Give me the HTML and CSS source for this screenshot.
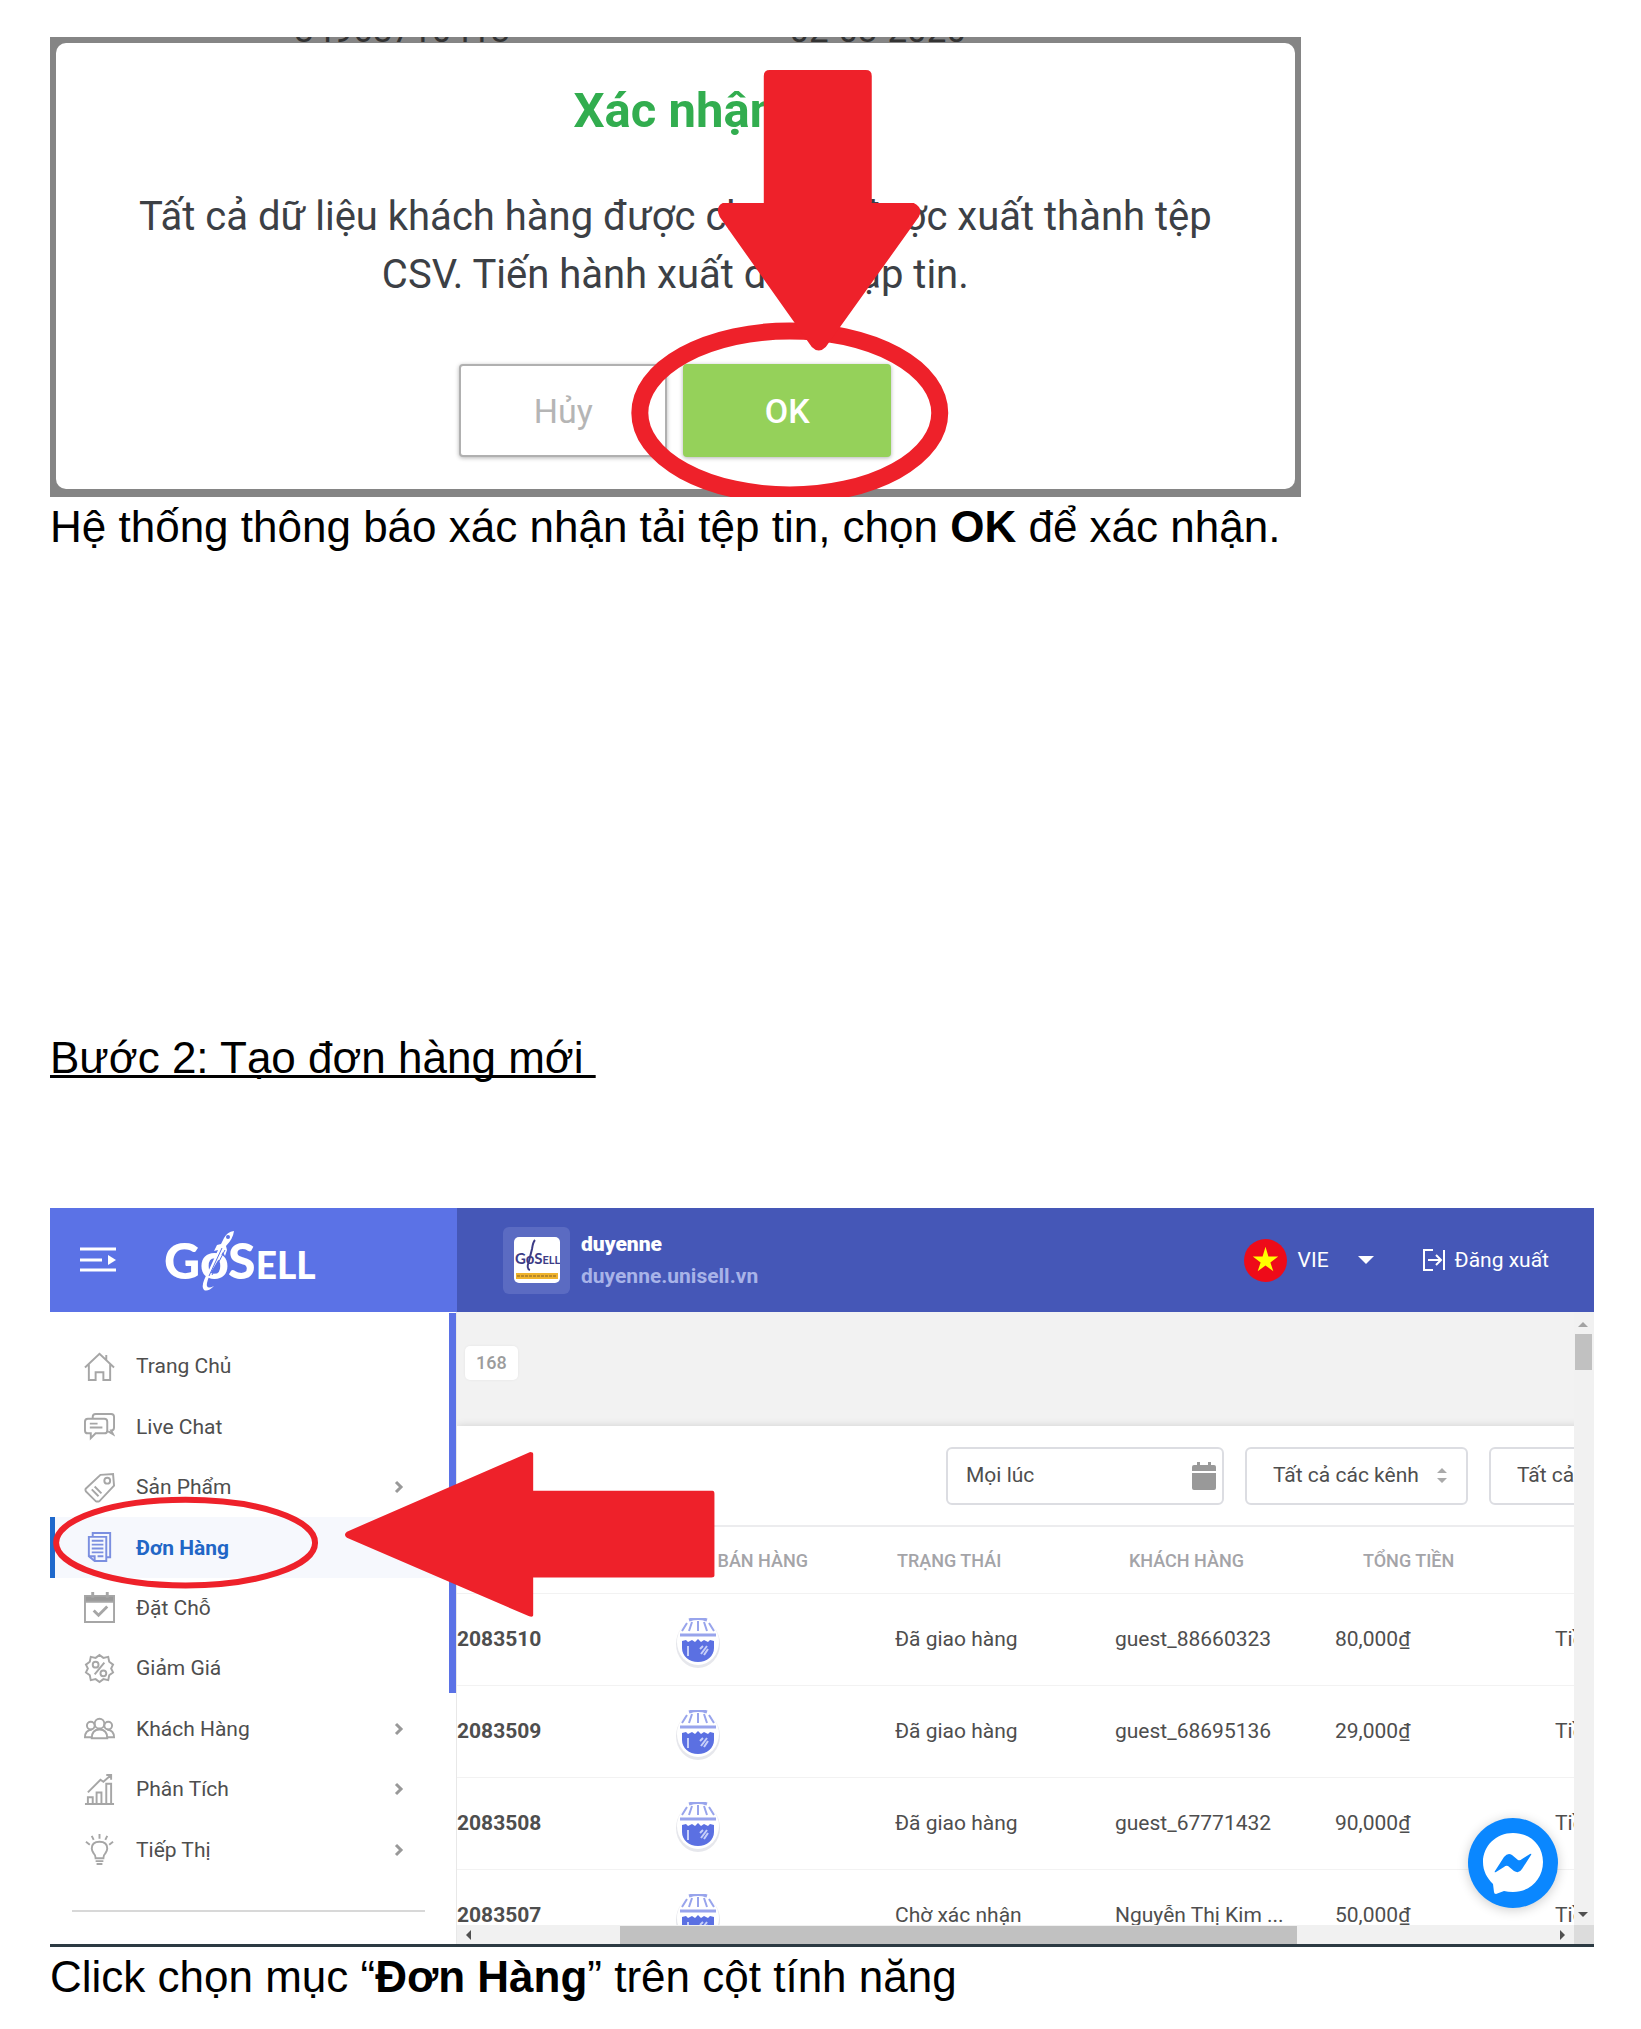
FILE: index.html
```html
<!DOCTYPE html>
<html lang="vi">
<head>
<meta charset="utf-8">
<title>Hướng dẫn GoSell</title>
<link rel="stylesheet" href="styles.css">
</head>
<body>
<svg class="defs" width="0" height="0" aria-hidden="true">
  <symbol id="chevron" viewBox="0 0 10 14"><path d="M2 2l5 5-5 5" fill="none" stroke="#999" stroke-width="3"/></symbol>
  <symbol id="web" viewBox="0 0 44 50">
    <ellipse cx="22" cy="26" rx="22" ry="24" fill="#e6e7ec"/>
    <ellipse cx="22" cy="24" rx="21" ry="23" fill="#fff"/>
    <path d="M13 2q9-3 18 0M4 17h36" fill="none" stroke="#98a4ec" stroke-width="3"/>
    <path d="M11 5l-5 8M16 4l-3 9M22 3v10M28 4l3 9M33 5l5 8" stroke="#98a4ec" stroke-width="2"/>
    <path d="M6 23l4-1 2 2 4-2 3 2 3-3 3 3 3-2 4 2 2-2 4 1V30C38 38 31 44 22 44S6 38 6 30Z" fill="#5b70e2"/>
    <path d="M12 28v10M25 36l6-8M28 37l4-6M24 31l3-3" stroke="#c7cff8" stroke-width="2"/>
  </symbol>
</svg>
<main class="page">
  <figure class="shot confirm">
    <div class="behind"><span>84968710413</span><span>02-03-2020</span></div>
    <section class="dialog">
      <h2>Xác nhận</h2>
      <p>Tất cả dữ liệu khách hàng được chọn sẽ được xuất thành tệp<br>CSV. Tiến hành xuất được tập tin.</p>
      <div class="actions">
        <button type="button" class="btn cancel">Hủy</button>
        <button type="button" class="btn ok">OK</button>
      </div>
    </section>
    <svg class="marks" viewBox="0 0 1251 460" aria-hidden="true">
      <ellipse cx="740" cy="376" rx="150" ry="82" fill="none" stroke="#ee212a" stroke-width="17"/>
      <path d="M720 33h96q6 0 6 6v127h42q10 5 5 14L776 310q-7 7-14 0L670 180q-5-10 3-14h41V39q0-6 6-6Z" fill="#ee212a"/>
    </svg>
  </figure>
  <p class="caption">Hệ thống thông báo xác nhận tải tệp tin, chọn <b>OK</b> để xác nhận.</p>

  <h1 class="step">Bước 2: Tạo đơn hàng mới&nbsp;</h1>

  <figure class="shot app">
    <header class="topbar">
      <div class="brand">
        <button type="button" class="menu" aria-label="Menu">
          <svg width="36" height="26" viewBox="0 0 36 26"><path d="M0 2h36M0 13h22M0 23h36" stroke="#fff" stroke-width="3"/><path d="M28 8l8 5-8 5Z" fill="#fff"/></svg>
        </button>
        <a class="logo" href="#"><span>GoS</span><small>ELL</small>
          <svg viewBox="0 0 36 62" width="36" height="62" aria-hidden="true"><path d="M34 1q-7 1-10 7l-3 6-4 1-3 6 4-1-10 22Q0 56 4 60q4 2 10-4-6 3-7 0Q6 53 11 42L23 22l2 4 2-6-1-4q7-7 8-15Z" fill="#fff"/><path d="M22 18L9 46M25 20L12 45" stroke="#5b72e6" stroke-width="1"/><circle cx="28" cy="7" r="2" fill="#5b72e6"/></svg>
        </a>
      </div>
      <div class="store">
        <span class="thumb"><span class="thumb-in"><svg width="46" height="46" viewBox="0 0 46 46"><text x="1" y="27"><tspan class="big">GoS</tspan><tspan>ELL</tspan></text><path d="M21 3q-2 2-3 9l-3 12q-3 8 1 9" fill="none" stroke="#3d3c86" stroke-width="2"/><path d="M2 36h42v6H2Z" fill="#efb32d"/><path d="M3 39h40" stroke="#b8892a" stroke-width="2" stroke-dasharray="3 1"/></svg></span></span>
        <div class="names"><b>duyenne</b><a href="#">duyenne.unisell.vn</a></div>
      </div>
      <button type="button" class="lang">
        <svg width="43" height="43" viewBox="0 0 44 44"><circle cx="22" cy="22" r="22" fill="#ee0b19"/><path d="M22 8l3 10h10l-8 6 3 9-8-6-8 6 3-9-8-6h10Z" fill="#ff0"/></svg>
        VIE
        <svg class="caret" width="16" height="8" viewBox="0 0 16 8"><path d="M0 0h16L8 8Z" fill="#fff"/></svg>
      </button>
      <a class="logout" href="#">
        <svg width="22" height="22" viewBox="0 0 22 22" fill="none" stroke="#fff" stroke-width="2"><path d="M10 1H1v20h9M5 11h13M13 6l5 5-5 5M21 1v20"/></svg>
        Đăng xuất
      </a>
    </header>
    <div class="body">
      <nav class="side">
        <ul>
          <li><a href="#"><svg viewBox="0 0 32 32"><path d="M1 17L16 3l15 14M5 14v16h7v-8h8v8h7V14M23 9V4"/></svg>Trang Chủ</a></li>
          <li><a href="#"><svg viewBox="0 0 32 32"><path d="M9 8V6q0-3 3-3h16q3 0 3 3v11q0 3-3 3l2 4-5-3M4 8h17q3 0 3 3v9q0 3-3 3h-9l-5 5v-5H4q-3 0-3-3v-9q0-3 3-3ZM6 13h8M6 17h13"/></svg>Live Chat</a></li>
          <li><a href="#"><svg viewBox="0 0 32 32"><path d="M17 3l13-1 1 12L16 30q-2 1-4 0L2 20q-1-2 0-3ZM8 18l7 7M11 15l7 7"/><circle cx="24" cy="9" r="3"/></svg>Sản Phẩm<svg class="go"><use href="#chevron"/></svg></a></li>
          <li class="active"><a href="#"><svg viewBox="0 0 32 32"><path d="M9 4V1h18v25h-4M5 5h18v25H11l-6-5ZM5 25h6v5M8 9h12M8 13h12M8 17h12M8 21h12M14 25h6"/></svg>Đơn Hàng</a></li>
          <li><a href="#"><svg viewBox="0 0 32 32"><path d="M1 4h30v27H1Z"/><path d="M1 4h30v6H1Z" fill="#999"/><path d="M9 0v6M24 0v6" stroke-width="3"/><path d="M10 19l5 5 9-9" stroke-width="3"/></svg>Đặt Chỗ</a></li>
          <li><a href="#"><svg viewBox="0 0 32 32"><path d="M16 2l4 3 5-1 1 5 4 3-2 4 2 4-4 3-1 5-5-1-4 3-4-3-5 1-1-5-4-3 2-4-2-4 4-3 1-5 5 1ZM21 10L11 22"/><circle cx="12" cy="12" r="3"/><circle cx="20" cy="21" r="3"/></svg>Giảm Giá</a></li>
          <li><a href="#"><svg viewBox="0 0 32 32"><circle cx="16" cy="11" r="5"/><circle cx="7" cy="13" r="4"/><circle cx="25" cy="13" r="4"/><path d="M8 26q0-9 8-9t8 9ZM8 25H1q0-7 7-8M24 25h7q0-7-7-8"/></svg>Khách Hàng<svg class="go"><use href="#chevron"/></svg></a></li>
          <li><a href="#"><svg viewBox="0 0 32 32"><path d="M1 31h30M4 31v-7h5v7M13 31V19h5v12M23 31V10h5v21M4 19L17 6l3 2 8-7M23 1h5v5"/></svg>Phân Tích<svg class="go"><use href="#chevron"/></svg></a></li>
          <li><a href="#"><svg viewBox="0 0 32 32"><path d="M12 25q0-3-2-5-2-3-2-5 0-7 8-7t8 7q0 2-2 5-2 2-2 5ZM12 28h8M13 31h6M16 0v5M8 2l2 4M24 2l-2 4M2 8l4 3M30 8l-4 3"/></svg>Tiếp Thị<svg class="go"><use href="#chevron"/></svg></a></li>
        </ul>
        <hr>
        <span class="side-thumb"></span>
      </nav>
      <div class="view">
        <div class="scroller">
          <div class="summary"><span class="count">168</span></div>
          <div class="panel">
            <form class="filters">
              <div class="field date"><input type="text" value="Mọi lúc" aria-label="Thời gian">
                <svg width="24" height="28" viewBox="0 0 24 28" fill="#999"><path d="M5 0h3v3h8V0h3v3h3q2 0 2 2v4H0V5q0-2 2-2h3ZM0 11h24v15q0 2-2 2H2q-2 0-2-2Z"/></svg></div>
              <div class="field channel"><select aria-label="Kênh"><option>Tất cả các kênh</option></select>
                <svg width="10" height="16" viewBox="0 0 10 16" fill="#aaa"><path d="M0 5l5-5 5 5ZM0 10h10l-5 5Z"/></svg></div>
              <div class="field channel"><select aria-label="Trạng thái"><option>Tất cả</option></select></div>
            </form>
            <table>
              <colgroup><col class="c-id"><col class="c-channel"><col class="c"><col class="c"><col class="c"><col class="c"></colgroup>
              <thead><tr><th></th><th class="in1">KÊNH BÁN HÀNG</th><th>TRẠNG THÁI</th><th class="in2">KHÁCH HÀNG</th><th class="in3">TỔNG TIỀN</th><th></th></tr></thead>
              <tbody>
                <tr><td><b>2083510</b></td><td class="ch"><svg><use href="#web"/></svg></td><td>Đã giao hàng</td><td>guest_88660323</td><td>80,000₫</td><td>Tiền mặt</td></tr>
                <tr><td><b>2083509</b></td><td class="ch"><svg><use href="#web"/></svg></td><td>Đã giao hàng</td><td>guest_68695136</td><td>29,000₫</td><td>Tiền mặt</td></tr>
                <tr><td><b>2083508</b></td><td class="ch"><svg><use href="#web"/></svg></td><td>Đã giao hàng</td><td>guest_67771432</td><td>90,000₫</td><td>Tiền mặt</td></tr>
                <tr><td><b>2083507</b></td><td class="ch"><svg><use href="#web"/></svg></td><td>Chờ xác nhận</td><td>Nguyễn Thị Kim ...</td><td>50,000₫</td><td>Tiền mặt</td></tr>
              </tbody>
            </table>
          </div>
        </div>
        <div class="vbar">
          <svg width="10" height="5" viewBox="0 0 10 5"><path d="M0 5l5-5 5 5Z" fill="#a3a3a3"/></svg>
          <i></i>
          <svg width="10" height="5" viewBox="0 0 10 5"><path d="M0 0h10L5 5Z" fill="#505050"/></svg>
        </div>
        <div class="hbar">
          <svg width="5" height="10" viewBox="0 0 5 10"><path d="M5 0v10L0 5Z" fill="#505050"/></svg>
          <i></i>
          <svg width="5" height="10" viewBox="0 0 5 10"><path d="M0 0v10l5-5Z" fill="#505050"/></svg>
        </div>
        <div class="corner"></div>
        <button type="button" class="messenger" aria-label="Messenger">
          <svg width="90" height="90" viewBox="0 0 90 90"><path d="M45 15C28 15 15 28 15 44c0 9 4 16 10 22l1 8q0 2 2 2l8-3q4 1 9 1c17 0 30-13 30-30S62 15 45 15Z" fill="#fff"/><path d="M27 53l9-14q4-5 8-2l6 5q2 1 4-1l8-5q2-1 1 1l-9 14q-3 5-8 2l-6-5q-2-1-4 1l-8 5q-2 1-1-1Z" fill="#0a87ff"/></svg>
        </button>
      </div>
    </div>
    <svg class="marks" viewBox="0 0 1544 739" aria-hidden="true">
      <ellipse cx="133" cy="336" rx="130" ry="43" fill="none" stroke="#ee212a" stroke-width="6"/>
      <path d="M295 325L479 245q3 0 3 2v37h180q2 0 2 3v82q0 2-3 2H482v38q0 2-4 1L295 331q-4-3 0-6Z" fill="#ee212a"/>
    </svg>
  </figure>
  <p class="caption">Click chọn mục “<b>Đơn Hàng</b>” trên cột tính năng</p>
</main>
</body>
</html>
```
FILE: styles.css
```css
* { box-sizing: border-box; }
body { margin: 0; background: #fff; color: #000; font-family: "Liberation Sans", Arial, sans-serif; }
.defs { position: absolute; }
.page { padding: 37px 47px 0 50px; }
h1, h2, p, ul, figure { margin: 0; padding: 0; }
a { color: inherit; text-decoration: none; }
button { border: 0; padding: 0; background: none; font: inherit; color: inherit; }
.shot { position: relative; overflow: hidden; font-family: Roboto, sans-serif; }
.marks { position: absolute; inset: 0; width: 100%; height: 100%; pointer-events: none; }
.caption, .step { font-size: 44px; line-height: 60px; font-weight: 400; }
.step { margin: 471px 0 120px; text-decoration: underline; text-decoration-thickness: 3px; text-decoration-skip-ink: none; }

/* confirmation dialog */
.confirm { width: 81%; background: #858585; padding: 0 6px 8px; }
.behind { display: flex; align-items: flex-end; gap: 279px; height: 6px; padding-left: 238px; overflow: hidden; font-size: 35px; line-height: 24px; color: #333; }
.dialog { background: #fff; border-radius: 10px; padding: 36px 0 32px; text-align: center; }
.dialog h2 { font-size: 49px; line-height: 64px; font-weight: 700; color: #32ad4f; }
.dialog p { margin-top: 45px; font-size: 40px; line-height: 58px; color: #3c4045; white-space: nowrap; }
.actions { display: flex; justify-content: center; gap: 16px; margin-top: 60px; }
.btn { width: 208px; height: 93px; border-radius: 4px; font-size: 34px; box-shadow: 0 1px 4px rgba(0,0,0,.3); }
.cancel { border: 2px solid #b0b0b0; background: #fff; color: #b5b5b5; }
.ok { background: #95d15a; color: #fff; font-weight: 500; }

/* app header */
.app { font-size: 21px; line-height: 28px; color: #4e4e4e; border-bottom: 3px solid #2c3a42; }
.topbar { display: flex; align-items: center; height: 104px; background: #4557b7; color: #fff; }
.brand { display: flex; align-items: center; gap: 48px; width: 407px; height: 100%; padding-left: 30px; background: #5b72e6; }
.menu { display: flex; }
.logo { position: relative; padding-top: 4px; font-family: Lato, sans-serif; font-weight: 900; font-size: 50px; line-height: 60px; }
.logo small { font-size: 37px; }
.logo svg { position: absolute; left: 36px; top: 4px; }
.store { display: flex; align-items: center; gap: 11px; flex: 1; padding-left: 46px; }
.thumb { display: grid; place-items: center; width: 67px; height: 67px; border-radius: 6px; background: #5b6bc2; }
.thumb-in { display: flex; width: 46px; height: 46px; border-radius: 5px; background: #fff; overflow: hidden; }
.thumb text { font-family: Lato, sans-serif; font-size: 11px; font-weight: 700; fill: #3d3c86; }
.thumb .big { font-size: 15px; }
.names { display: grid; gap: 4px; font-weight: 700; }
.names a { color: #a8b3e8; }
.lang { display: flex; align-items: center; gap: 11px; margin-right: 49px; }
.caret { margin-left: 18px; }
.logout { display: flex; align-items: center; gap: 10px; padding-right: 45px; }

/* sidebar */
.body { display: flex; height: 632px; }
.side { position: relative; width: 407px; padding-top: 24px; border-right: 1px solid #e8e8e8; }
.side ul { display: grid; grid-auto-rows: 1fr; height: 544px; list-style: none; }
.side a { display: flex; align-items: center; height: 100%; padding: 0 52px 0 34px; }
.side a svg { width: 31px; height: 31px; margin-right: 21px; fill: none; stroke: #a6a6a6; stroke-width: 2; }
.side a .go { width: 10px; height: 14px; margin: 0 0 0 auto; }
.side .active { background: #f6f8fd; border-left: 5px solid #1f69cc; color: #2166c6; font-weight: 700; }
.side .active a { padding-left: 29px; }
.side .active svg { stroke: #7b8fe0; }
.side hr { margin: 30px 31px 0 22px; border: 0; border-top: 2px solid #d8d8d8; }
.side-thumb { position: absolute; right: 0; top: 1px; width: 7px; height: 380px; background: #5b72e6; }

/* order list with its scroll bars */
.view { position: relative; flex: 1; min-width: 0; display: grid; grid-template: minmax(0, 1fr) 19px / minmax(0, 1fr) 20px; }
.scroller { overflow: hidden; background: #f2f2f2; }
.summary { height: 114px; padding: 34px 8px; }
.count { display: inline-block; padding: 0 11px; border-radius: 5px; background: #fff; color: #9c9c9c; font-size: 18px; line-height: 34px; font-weight: 500; box-shadow: 0 0 3px rgba(0,0,0,.06); }
.panel { width: 1317px; background: #fff; box-shadow: 0 0 8px rgba(0,0,0,.14); }
.filters { display: flex; gap: 21px; height: 101px; padding: 21px 0 0 489px; border-bottom: 2px solid #ececee; }
.field { position: relative; display: flex; align-items: center; height: 58px; border: 2px solid #dcdde2; border-radius: 6px; background: #fff; }
.field input, .field select { width: 100%; height: 100%; border: 0; padding: 0 0 2px; background: none; appearance: none; font: inherit; color: inherit; }
.date { width: 278px; padding: 0 6px 0 18px; }
.channel { width: 223px; padding: 0 19px 0 26px; }
.field svg { flex: none; }
table { width: 100%; table-layout: fixed; border-collapse: collapse; }
.c-id { width: 201px; }
.c-channel { width: 237px; }
.c { width: 220px; }
th { height: 66px; padding: 2px 0 0 2px; border-bottom: 1px solid #f2f2f2; font-size: 18px; font-weight: 500; text-align: left; color: #a4a4a8; white-space: nowrap; }
th.in1 { padding-left: 8px; }
th.in2 { padding-left: 14px; }
th.in3 { padding-left: 28px; }
td { height: 92px; padding: 0; border-bottom: 1px solid #f2f2f2; white-space: nowrap; }
td b { font-weight: 700; }
.ch svg { display: block; width: 44px; height: 50px; margin: 8px 0 0 18px; }
.vbar { display: flex; flex-direction: column; align-items: center; padding: 10px 2px 8px 0; background: #f1f1f1; }
.vbar i { width: 17px; height: 36px; margin: 7px 0 auto; background: #c1c1c1; }
.hbar { display: flex; align-items: center; padding: 0 9px; background: #f1f1f1; }
.hbar i { flex: 1; height: 18px; margin: 0 263px 0 149px; background: #c1c1c1; }
.corner { background: #dcdcdc; }
.messenger { position: absolute; right: 36px; bottom: 36px; width: 90px; height: 90px; border-radius: 50%; background: #0a87ff; box-shadow: 0 2px 12px rgba(0,0,0,.2); }
```
